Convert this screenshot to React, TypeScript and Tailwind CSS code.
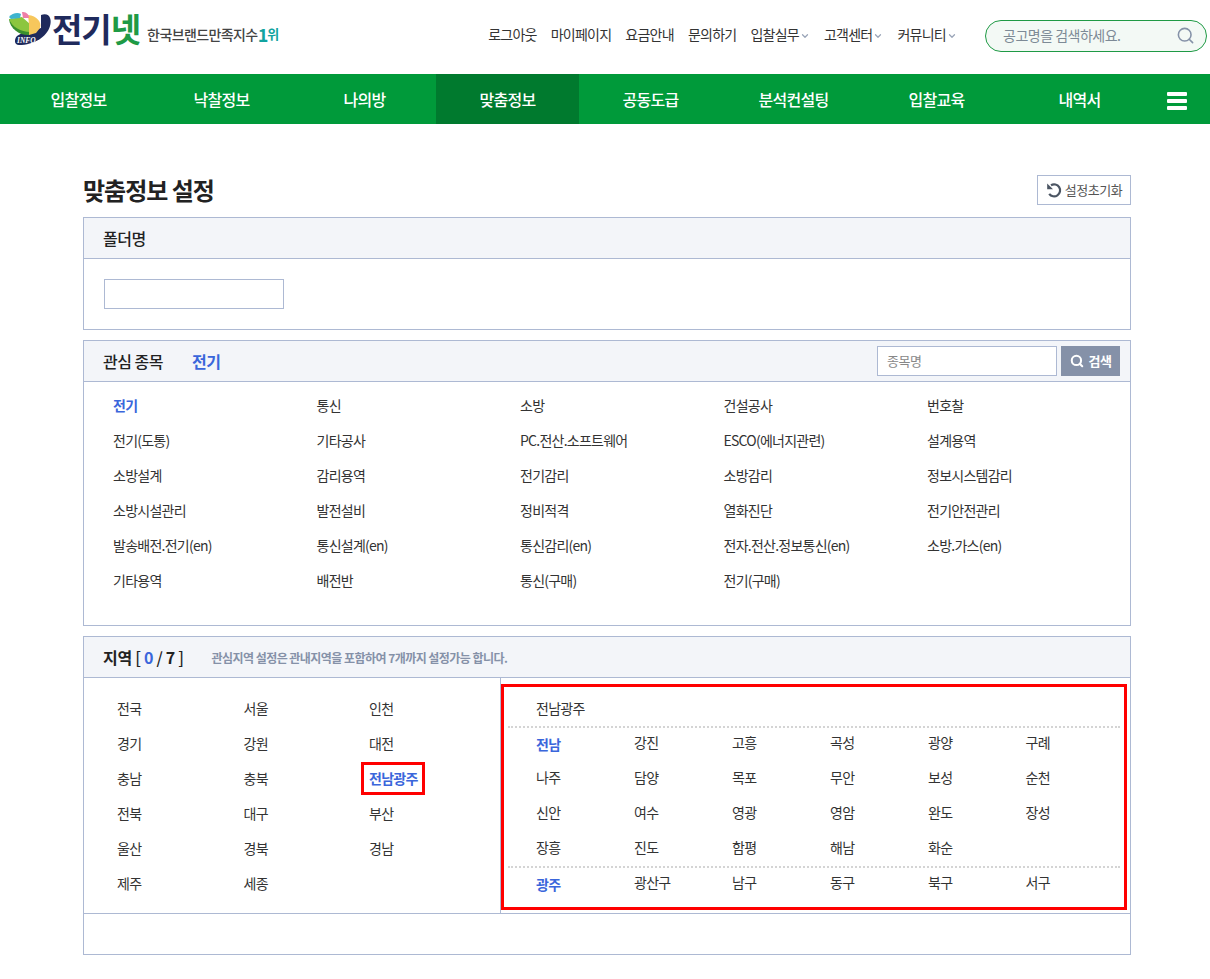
import { ChevronDown, Search } from "lucide-react";

const topLinks = [
  { label: "로그아웃" },
  { label: "마이페이지" },
  { label: "요금안내" },
  { label: "문의하기" },
  { label: "입찰실무", caret: true },
  { label: "고객센터", caret: true },
  { label: "커뮤니티", caret: true },
];

const navItems = ["입찰정보", "낙찰정보", "나의방", "맞춤정보", "공동도급", "분석컨설팅", "입찰교육", "내역서"];

const categories = [
  "전기", "통신", "소방", "건설공사", "번호찰",
  "전기(도통)", "기타공사", "PC.전산.소프트웨어", "ESCO(에너지관련)", "설계용역",
  "소방설계", "감리용역", "전기감리", "소방감리", "정보시스템감리",
  "소방시설관리", "발전설비", "정비적격", "열화진단", "전기안전관리",
  "발송배전.전기(en)", "통신설계(en)", "통신감리(en)", "전자.전산.정보통신(en)", "소방.가스(en)",
  "기타용역", "배전반", "통신(구매)", "전기(구매)",
];

const regions = ["전국", "서울", "인천", "경기", "강원", "대전", "충남", "충북", "전남광주", "전북", "대구", "부산", "울산", "경북", "경남", "제주", "세종"];

const jeonnam = [
  "전남", "강진", "고흥", "곡성", "광양", "구례",
  "나주", "담양", "목포", "무안", "보성", "순천",
  "신안", "여수", "영광", "영암", "완도", "장성",
  "장흥", "진도", "함평", "해남", "화순",
];

const gwangju = ["광주", "광산구", "남구", "동구", "북구", "서구"];

function Logo() {
  return (
    <div className="flex items-center">
      <svg width="44" height="36" viewBox="0 0 44 36">
        <path d="M33 5 C42 2 44 10 42 16 C39 27 26 35 11 35 C6 35 6 29 9 26 L14 23 L33 18Z" fill="#1f2a5c" />
        <path d="M1 9 C2 19 12 26 22 25 L22 21 L2 9Z" fill="#3a8f2e" />
        <path d="M1 9 L14 7 L22 14 L22 22 C13 22 4 17 1 9Z" fill="#8cc63f" />
        <path d="M20 5 C29 6 34 12 32 18 L28 23 L21 25 L21 14 Z" fill="#f7c75c" />
        <path d="M1 7 C4 3 10 2 13 4 L12 8 L3 9Z" fill="#3fb4cf" />
        <path d="M14 2 C17 2 21 3 21 8 L15 8 Z" fill="#ee7fa8" />
        <text x="9" y="32.5" fontSize="7.5" fontStyle="italic" fontWeight="700" fill="#fff" fontFamily="'Liberation Serif', serif">INFO</text>
      </svg>
      <span className="text-[33px] leading-none font-bold tracking-[-1px] text-[#1f2a5c]">전기</span>
      <span className="text-[33px] leading-none font-bold tracking-[-1px] text-[#1f9a45]">넷</span>
      <span className="ml-[7px] mt-[12px] text-[14px] font-medium tracking-[-0.6px] text-[#444]">한국브랜드만족지수</span>
      <span className="mt-[12px] text-[18px] leading-none font-bold tracking-[-1px] text-[#12a3a0]">1</span>
      <span className="mt-[12px] text-[13px] font-bold tracking-[-0.5px] text-[#12a3a0]">위</span>
    </div>
  );
}

function Header() {
  return (
    <header className="flex h-[74px] items-center pl-[8px] pr-[3px]">
      <div className="mb-[18px]">
        <Logo />
      </div>
      <div className="ml-auto flex items-center gap-[14px] pb-[5px]">
        {topLinks.map((l) => (
          <span key={l.label} className="flex items-center gap-[1px] text-[14px] tracking-[-0.75px] text-[#333]">
            {l.label}
            {l.caret && <ChevronDown size={10} strokeWidth={3} className="mt-[3px] text-[#9aa5b8]" />}
          </span>
        ))}
      </div>
      <div className="ml-[28px] mb-[3px] flex h-[32px] w-[222px] items-center justify-between rounded-full border border-[#1f9a45] bg-[#f3f9f5] pl-[17px] pr-[11px]">
        <span className="text-[14px] tracking-[-0.5px] text-[#7d8a96]">공고명을 검색하세요.</span>
        <Search size={19} strokeWidth={2} className="text-[#8592a8]" />
      </div>
    </header>
  );
}

function Nav() {
  return (
    <nav className="flex h-[50px] items-stretch bg-[#009a3a] pl-[7px]">
      {navItems.map((n) => (
        <div
          key={n}
          className={`flex w-[143px] items-center justify-center text-[16px] font-medium tracking-[-0.75px] text-white ${n === "맞춤정보" ? "bg-[#007a2e]" : ""}`}
        >
          {n}
        </div>
      ))}
      <div className="ml-[16px] flex flex-col gap-[3px]">
        <div className="mt-[18px] h-[4px] w-[20px] rounded-[1px] bg-white" />
        <div className="h-[4px] w-[20px] rounded-[1px] bg-white" />
        <div className="h-[4px] w-[20px] rounded-[1px] bg-white" />
      </div>
    </nav>
  );
}

function PanelHead({ children }: { children: React.ReactNode }) {
  return (
    <div className="flex h-[41px] items-center border-b border-[#adb9d3] bg-[#f3f5f9] pl-[19px] pr-[10px]">
      {children}
    </div>
  );
}

function AreaCell({ name, head }: { name: string; head: boolean }) {
  return (
    <div
      className={`flex h-[35px] items-center text-[14px] tracking-[-0.75px] ${head ? "pt-[4px] font-bold text-[#3a66db]" : "text-[#333]"}`}
    >
      {name}
    </div>
  );
}

export default function App() {
  return (
    <div className="min-h-[979px] bg-white text-[#333] font-['Noto_Sans_CJK_KR','Noto_Sans',sans-serif]">
      <Header />
      <Nav />
      <main className="mx-[83px] w-[1048px]">
        <div className="flex h-[93px] items-end justify-between pb-[12px]">
          <h1 className="mb-[-3px] text-[24px] font-bold tracking-[-1px] text-[#222]">맞춤정보 설정</h1>
          <button className="flex h-[30px] w-[94px] items-center justify-center gap-[3px] border border-[#adb9d3] text-[13px] tracking-[-0.5px] text-[#555]">
            <svg width="16" height="16" viewBox="0 0 16 16" fill="none">
              <path d="M5 3.2 A6 6 0 1 1 3.2 11.8" stroke="#4b5563" strokeWidth="2.2" />
              <path d="M1.2 1.5 L1.2 7.2 L7 7.2 Z" fill="#4b5563" />
            </svg>
            설정초기화
          </button>
        </div>

        <section className="h-[113px] border border-[#adb9d3]">
          <PanelHead>
            <h2 className="text-[16px] font-medium tracking-[-0.5px] text-[#222]">폴더명</h2>
          </PanelHead>
          <div className="pl-[20px] pt-[20px]">
            <input className="block h-[30px] w-[180px] border border-[#adb9d3]" />
          </div>
        </section>

        <section className="mt-[10px] h-[286px] border border-[#adb9d3]">
          <PanelHead>
            <h2 className="w-[89px] text-[16px] font-medium tracking-[-0.5px] text-[#222]">관심 종목</h2>
            <span className="text-[16px] font-bold tracking-[-0.5px] text-[#3a66db]">전기</span>
            <div className="ml-auto flex gap-[4px]">
              <div className="flex h-[30px] w-[180px] items-center border border-[#adb9d3] bg-white pl-[9px] text-[13px] tracking-[-0.5px] text-[#888]">
                종목명
              </div>
              <button className="flex h-[30px] w-[59px] items-center justify-center gap-[5px] bg-[#8591a8] text-[13px] font-bold tracking-[-0.5px] text-white">
                <Search size={14} strokeWidth={3.5} />
                검색
              </button>
            </div>
          </PanelHead>
          <div className="grid grid-cols-[203.5px_203.5px_203.5px_203.5px_1fr] pl-[29px] pt-[6px]">
            {categories.map((c) => (
              <div
                key={c}
                className={`flex h-[35px] items-center text-[14px] tracking-[-0.75px] ${c === "전기" ? "font-bold text-[#3a66db]" : "text-[#333]"}`}
              >
                {c}
              </div>
            ))}
          </div>
        </section>

        <section className="mt-[10px] h-[319px] border border-[#adb9d3]">
          <PanelHead>
            <h2 className="text-[16px] font-bold tracking-[-0.3px] text-[#222]">
              지역 <span className="font-medium">[</span> <span className="text-[#3a66db]">0</span> <span className="font-medium">/</span> 7 <span className="font-medium">]</span>
            </h2>
            <span className="ml-[28px] mt-[2px] text-[12px] font-bold tracking-[-0.55px] text-[#8591a8]">
              관심지역 설정은 관내지역을 포함하여 7개까지 설정가능 합니다.
            </span>
          </PanelHead>
          <div className="flex h-[236px] border-b border-[#adb9d3]">
            <div className="grid w-[417px] grid-cols-[126.5px_125.5px_1fr] content-start border-r border-[#adb9d3] pl-[33px] pt-[13px]">
              {regions.map((r) => (
                <div key={r} className="flex h-[35px] items-center text-[14px] tracking-[-0.75px] text-[#333]">
                  {r === "전남광주" ? (
                    <span className="ml-[-8px] flex h-[33px] w-[64px] items-center border-[3px] border-[#f00] pl-[5px] font-bold text-[#3a66db]">
                      {r}
                    </span>
                  ) : (
                    r
                  )}
                </div>
              ))}
            </div>
            <div className="mt-[6px] h-[226px] w-[626px] border-[3px] border-[#f00] px-[4px]">
              <div className="flex h-[39px] items-center pl-[28px] pt-[3px] text-[14px] tracking-[-0.75px] text-[#333]">전남광주</div>
              <div className="border-t-2 border-dotted border-[#d4d4d4]" />
              <div className="mt-[-3px] grid grid-cols-[98px_98px_98px_98px_97.5px_1fr] pl-[28px]">
                {jeonnam.map((r) => (
                  <AreaCell key={r} name={r} head={r === "전남"} />
                ))}
              </div>
              <div className="mt-[1px] border-t-2 border-dotted border-[#d4d4d4]" />
              <div className="mt-[-3px] grid grid-cols-[98px_98px_98px_98px_97.5px_1fr] pl-[28px]">
                {gwangju.map((r) => (
                  <AreaCell key={r} name={r} head={r === "광주"} />
                ))}
              </div>
            </div>
          </div>
        </section>
      </main>
    </div>
  );
}
